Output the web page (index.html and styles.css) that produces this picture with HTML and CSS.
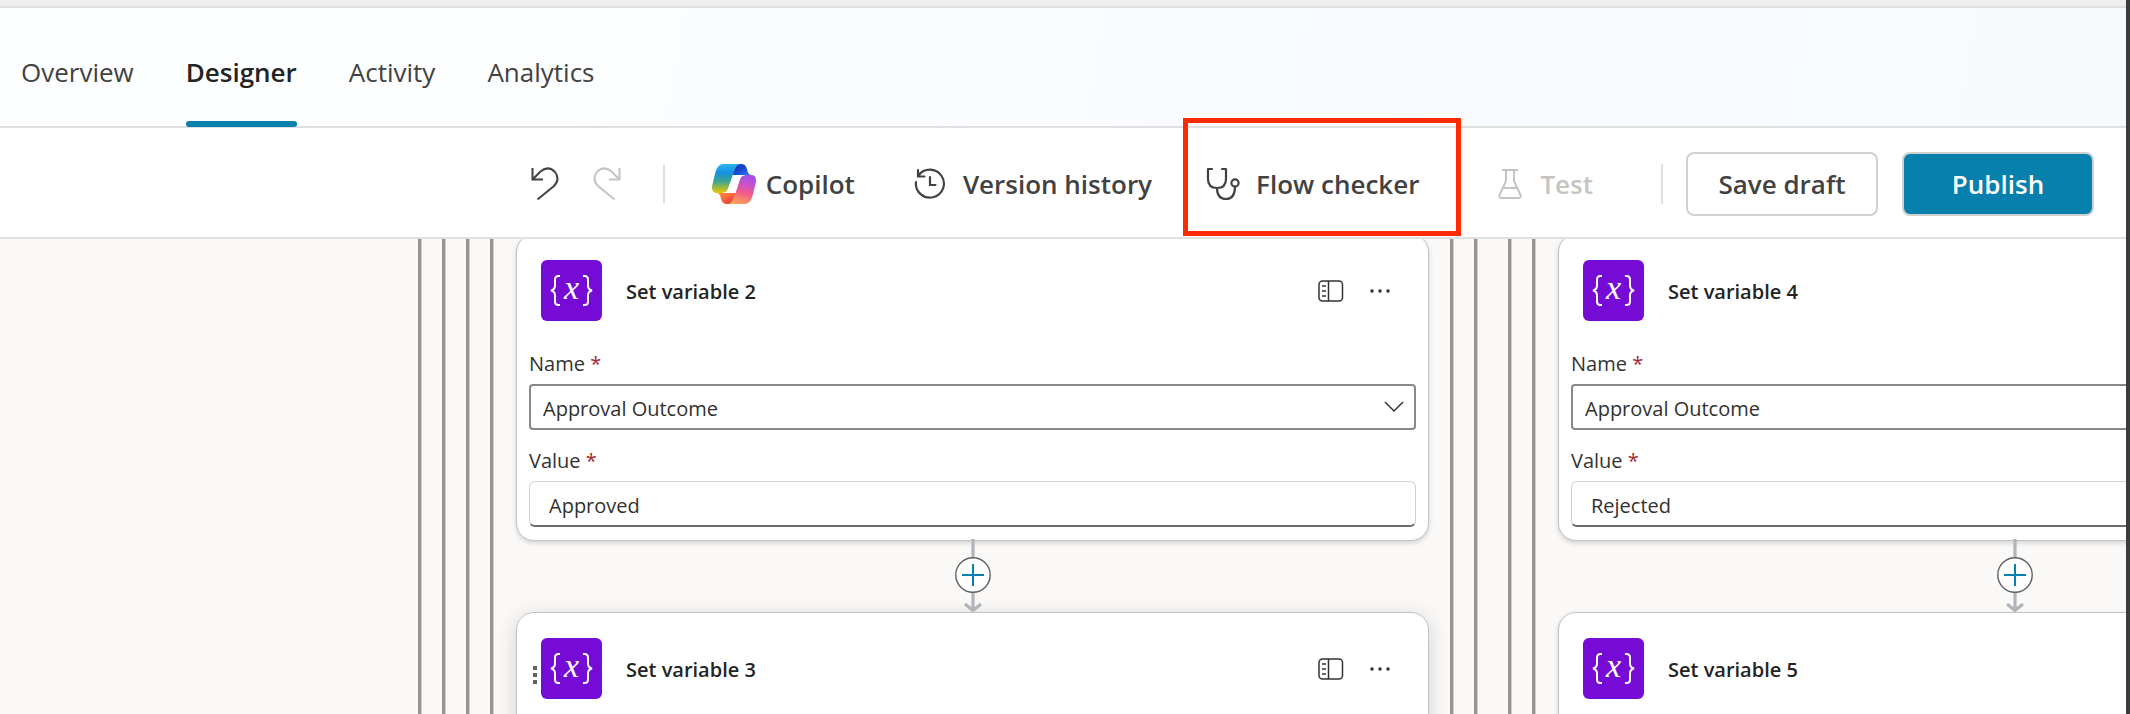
FILE: index.html
```html
<!DOCTYPE html>
<html lang="en">
<head>
<meta charset="utf-8">
<title>Flow designer</title>
<link rel="stylesheet" href="styles.css">
</head>
<body>
<svg class="defs" width="0" height="0" aria-hidden="true">
  <defs>
    <linearGradient id="cp-blue" x1="0" y1="0" x2="0" y2="1">
      <stop offset="0" stop-color="#2bb4f0"/><stop offset=".3" stop-color="#1590e0"/><stop offset=".6" stop-color="#3ea58f"/><stop offset=".82" stop-color="#9dbb3a"/><stop offset="1" stop-color="#f2c500"/>
    </linearGradient>
    <linearGradient id="cp-navy" x1="0" y1="0" x2="1" y2="1">
      <stop offset="0" stop-color="#0a2fb8"/><stop offset=".5" stop-color="#1748cf"/><stop offset="1" stop-color="#2a86ee"/>
    </linearGradient>
    <linearGradient id="cp-pink" x1=".6" y1="0" x2=".3" y2="1">
      <stop offset="0" stop-color="#a64ce8"/><stop offset=".25" stop-color="#c153d0"/><stop offset=".55" stop-color="#f0588f"/><stop offset="1" stop-color="#ffa651"/>
    </linearGradient>
    <linearGradient id="cp-red" x1="0" y1="0" x2="1" y2="1">
      <stop offset="0" stop-color="#ff9a3c"/><stop offset=".5" stop-color="#f9603a"/><stop offset="1" stop-color="#cf3545"/>
    </linearGradient>
    <symbol id="i-var" viewBox="0 0 61 61">
      <path d="M19 16h-1.500q-3.500 0-3.500 3.500v6q0 4-4 5q4 1 4 5v6q0 3.500 3.500 3.500H19M42 16h1.500q3.500 0 3.500 3.500v6q0 4 4 5q-4 1-4 5v6q0 3.500-3.500 3.500H42" fill="none" stroke="#fff" stroke-width="2"/>
      <text x="30.500" y="39" text-anchor="middle" class="var-x">x</text>
    </symbol>
    <symbol id="i-panel" viewBox="0 0 26 22">
      <g fill="none" stroke="#333" stroke-width="1.500"><rect x="1" y="1" width="23.500" height="20" rx="3.500"/><path d="M10.500 1v20M4 6h4M4 11h4M4 16h4"/></g>
    </symbol>
    <symbol id="i-more" viewBox="0 0 20 6">
      <g fill="#333"><circle cx="2" cy="3" r="1.800"/><circle cx="10" cy="3" r="1.800"/><circle cx="18" cy="3" r="1.800"/></g>
    </symbol>
    <symbol id="i-link" viewBox="0 0 36 74">
      <path d="M18 0v71M10 65l8 6.500 8-6.500" fill="none" stroke="#b3b3ba" stroke-width="3.200" stroke-linecap="butt" stroke-linejoin="round"/>
      <circle cx="18" cy="36" r="17.200" fill="#fff" stroke="#616161" stroke-width="1.400"/>
      <path d="M18 25v22M7 36h22" stroke="#0780ad" stroke-width="2"/>
    </symbol>
  </defs>
</svg>

<div class="app">
  <div class="top-strip"></div>
  <nav class="tabs">
    <a class="tab" href="#overview">Overview</a>
    <a class="tab tab-active" href="#designer" aria-current="page">Designer</a>
    <a class="tab" href="#activity">Activity</a>
    <a class="tab" href="#analytics">Analytics</a>
  </nav>

  <div class="toolbar">
    <div class="group group-undo">
      <button class="icon-btn" aria-label="Undo"><svg width="28" height="34" viewBox="0 0 28 34"><path d="M1.500 1v11.500H12M1.500 12.500L9.500 4.500q8-6.500 14.500.5q5.500 7-1 14L6.500 32.500" fill="none" stroke="#424242" stroke-width="2"/></svg></button>
      <button class="icon-btn" aria-label="Redo" disabled><svg width="28" height="34" viewBox="0 0 28 34"><path d="M26.500 1v11.500H16M26.500 12.500L18.500 4.500q-8-6.500-14.500.5q-5.500 7 1 14L21.500 32.500" fill="none" stroke="#c4c4c4" stroke-width="2"/></svg></button>
    </div>
    <span class="divider"></span>
    <button class="cmd cmd-copilot"><svg width="44" height="40" viewBox="0 0 44 40">
      <path d="M24 0h5q4.500 0 5.500 4l1 3q1 4 4 4H20z" fill="url(#cp-navy)"/>
      <path d="M20 40h-5q-4.500 0-5.500-4l-1-3q-1-4-4-4H24z" fill="url(#cp-red)"/>
      <path d="M11 0h18q-4.500 0-6.500 6L18 19q-1.500 5-2.500 7-1.500 3-5.500 3H5Q-1.500 29 .5 20L3.500 8Q6 0 11 0z" fill="url(#cp-blue)"/>
      <path d="M33 40H15q4.500 0 6.500-6L26 21q1.500-5 2.500-7 1.500-3 5.500-3h5q6.500 0 4.500 9l-3 12Q38 40 33 40z" fill="url(#cp-pink)"/>
      <path d="M22.500 15q1.500-4 5.500-4h6q-4 0-5.500 3-1 2-2.500 7l-2.500 8q-1.500 0-1.500 0H10q4 0 5.500-3 1-2 2.500-7z" fill="#fff"/>
    </svg><span>Copilot</span></button>
    <button class="cmd cmd-history"><svg width="32" height="32" viewBox="0 0 32 32"><g fill="none" stroke="#424242" stroke-width="2.200" stroke-linecap="round"><path d="M4.500 7.500A14 14 0 1 1 2 14M4 2v6.500h6.500M16 9v8h5.500"/></g></svg><span>Version history</span></button>
    <div class="checker">
      <button class="cmd cmd-checker"><svg width="34" height="34" viewBox="0 0 34 34"><g fill="none" stroke="#424242" stroke-width="2.200" stroke-linecap="round" stroke-linejoin="round"><path d="M6 2H2v10q0 9 9 9t9-9V2h-4M11 21q0 11 9 11t9-12.500"/><circle cx="29" cy="16" r="3.600"/></g></svg><span>Flow checker</span></button>
      <span class="highlight"></span>
    </div>
    <button class="cmd cmd-test" disabled><svg width="24" height="32" viewBox="0 0 24 32"><g fill="none" stroke="#c4c4c4" stroke-width="2"><path d="M4 2h16M8 2v11L1.500 27q-1 3 2 3h17q3 0 2-3L16 13V2M5 20h14"/></g></svg><span>Test</span></button>
    <span class="divider"></span>
    <div class="group group-actions">
      <button class="btn">Save draft</button>
      <button class="btn btn-primary">Publish</button>
    </div>
  </div>

  <main class="canvas">
    <div class="rails"><i></i><i></i><i></i><i></i></div>
    <section class="lane">
      <article class="card">
        <header class="card-head">
          <svg class="var" width="61" height="61"><use href="#i-var"/></svg>
          <h2>Set variable 2</h2>
          <button class="icon-btn" aria-label="Open panel"><svg width="26" height="22"><use href="#i-panel"/></svg></button>
          <button class="icon-btn" aria-label="More"><svg width="20" height="6"><use href="#i-more"/></svg></button>
        </header>
        <div class="field"><label for="n2">Name <b>*</b></label>
          <select id="n2" class="select"><option>Approval Outcome</option></select></div>
        <div class="field"><label for="v2">Value <b>*</b></label>
          <input id="v2" class="input" type="text" value="Approved"></div>
      </article>
      <button class="connector" aria-label="Insert a step"><svg width="36" height="74"><use href="#i-link"/></svg></button>
      <article class="card card-next card-raised">
        <header class="card-head">
          <span class="grip"><i></i><i></i><i></i></span>
          <svg class="var" width="61" height="61"><use href="#i-var"/></svg>
          <h2>Set variable 3</h2>
          <button class="icon-btn" aria-label="Open panel"><svg width="26" height="22"><use href="#i-panel"/></svg></button>
          <button class="icon-btn" aria-label="More"><svg width="20" height="6"><use href="#i-more"/></svg></button>
        </header>
      </article>
    </section>
    <div class="rails"><i></i><i></i></div>
    <div class="rails"><i></i><i></i></div>
    <section class="lane">
      <article class="card">
        <header class="card-head">
          <svg class="var" width="61" height="61"><use href="#i-var"/></svg>
          <h2>Set variable 4</h2>
        </header>
        <div class="field"><label for="n4">Name <b>*</b></label>
          <select id="n4" class="select"><option>Approval Outcome</option></select></div>
        <div class="field"><label for="v4">Value <b>*</b></label>
          <input id="v4" class="input" type="text" value="Rejected"></div>
      </article>
      <button class="connector" aria-label="Insert a step"><svg width="36" height="74"><use href="#i-link"/></svg></button>
      <article class="card card-next">
        <header class="card-head">
          <svg class="var" width="61" height="61"><use href="#i-var"/></svg>
          <h2>Set variable 5</h2>
        </header>
      </article>
    </section>
  </main>
</div>
</body>
</html>
```
FILE: styles.css
```css
* { box-sizing: border-box; }
body {
  margin: 0;
  font-family: "Open Sans", "Noto Sans", sans-serif;
  color: #242424;
  background: #3b3b3b;
}
.defs { position: absolute; }
button { font: inherit; color: inherit; background: none; border: 0; padding: 0; cursor: pointer; }
button:disabled { color: #c4c4c4; cursor: default; }
svg { display: block; flex: none; }

.app {
  display: flex;
  flex-direction: column;
  height: 100vh;
  margin-right: 4px;
  overflow: hidden;
  background: #fff;
}
.top-strip { height: 8px; flex: none; background: #efefef; border-bottom: 2px solid #e0e0e0; }

.tabs {
  display: flex;
  flex: none;
  gap: 52px;
  height: 120px;
  padding-left: 21px;
  border-bottom: 2px solid #e0e0e0;
  background: linear-gradient(100deg, #fdfeff 20%, #f8faff 65%, #f6fafd);
}
.tab {
  display: flex;
  align-items: center;
  padding-top: 10px;
  font-size: 26px;
  line-height: 36px;
  color: #424242;
  text-decoration: none;
}
.tab-active { position: relative; font-weight: 600; color: #242424; }
.tab-active::after {
  content: "";
  position: absolute;
  left: 0;
  right: 0;
  bottom: -1px;
  height: 6px;
  border-radius: 3px;
  background: #0780ad;
}

.toolbar {
  display: flex;
  flex: none;
  align-items: center;
  justify-content: flex-end;
  height: 111px;
  padding: 2px 32px 0 0;
  border-bottom: 2px solid #e0e0e0;
  font-size: 26px;
  line-height: 36px;
  font-weight: 600;
  color: #424242;
}
.group { display: flex; align-items: center; }
.group-undo { gap: 34px; margin-right: 42px; }
.group-actions { gap: 24px; margin-left: 23px; }
.divider { width: 2px; height: 40px; background: #e0e0e0; }
.cmd { display: flex; align-items: center; white-space: nowrap; }
.cmd-copilot { gap: 10px; margin-left: 47px; }
.cmd-history { gap: 17px; margin-left: 59px; }
.cmd-checker { gap: 16px; }
.checker { position: relative; margin-left: 54px; }
.highlight {
  position: absolute;
  inset: -48px -42px -34px -23px;
  border: 5px solid #ff2a00;
  pointer-events: none;
}
.cmd-test { gap: 18px; margin: 0 68px 0 79px; }
.btn {
  width: 192px;
  height: 64px;
  border: 2px solid #d1d1d1;
  border-radius: 8px;
  background: #fff;
}
.btn-primary { background: #0780ad; color: #fff; }

.canvas {
  display: flex;
  flex: 1;
  min-height: 0;
  align-items: stretch;
  padding-left: 418px;
  background: #faf9f8;
  overflow: hidden;
}
.rails { display: flex; flex: none; gap: 20px; }
.rails i { width: 4px; background: #979593; border-right: 1px solid #cfcdcb; }
.rails + .rails { margin-left: 30px; }
.lane {
  display: flex;
  flex-direction: column;
  flex: none;
  align-items: center;
  width: 913px;
  margin: -5px 21px 0 22px;
}
.card {
  flex: none;
  width: 100%;
  padding: 25px 12px 13px;
  border: 1px solid #c2c2c2;
  border-radius: 18px;
  background: #fff;
  box-shadow: 0 2px 5px rgba(0, 0, 0, .16);
}
.card-next { min-height: 306px; }
.card-raised { box-shadow: 0 4px 20px rgba(0, 0, 0, .16); }
.card-head { position: relative; display: flex; align-items: center; padding: 0 26px 0 12px; }
.card-head h2 { flex: 1; margin: 0 0 0 24px; padding-top: 2px; font-size: 20px; line-height: 28px; font-weight: 600; }
.card-head .icon-btn + .icon-btn { margin-left: 26px; }
.var { border-radius: 6px; background: #770bd6; }
.var-x { font: italic 34px "Liberation Serif", serif; fill: #fff; }
.grip { position: absolute; left: 4px; top: 28px; display: grid; gap: 3px; }
.grip i { width: 4px; height: 4px; background: #616161; }

.field { display: flex; flex-direction: column; font-size: 20px; color: #333; }
.card-head + .field { margin-top: 29px; }
.field label { line-height: 28px; margin-bottom: 6px; }
.field + .field { margin-top: 17px; }
.field b { font-weight: 400; color: #a4262c; }
.select, .input { width: 100%; font: inherit; color: #323130; background: #fff; }
.select {
  height: 46px;
  padding: 2px 12px 0;
  border: 2px solid #8a8886;
  border-radius: 4px;
  appearance: none;
  background: #fff url("data:image/svg+xml,%3Csvg xmlns='http://www.w3.org/2000/svg' width='20' height='12'%3E%3Cpath d='M1 1l9 9 9-9' fill='none' stroke='%23333' stroke-width='1.500'/%3E%3C/svg%3E") no-repeat right 10px center;
}
.input {
  height: 46px;
  padding: 4px 19px 0;
  border: 1px solid #d1d1d1;
  border-bottom: 2px solid #6b6b6b;
  border-radius: 6px;
}
.connector { margin: -2px 0 -1px; z-index: 1; }
```
